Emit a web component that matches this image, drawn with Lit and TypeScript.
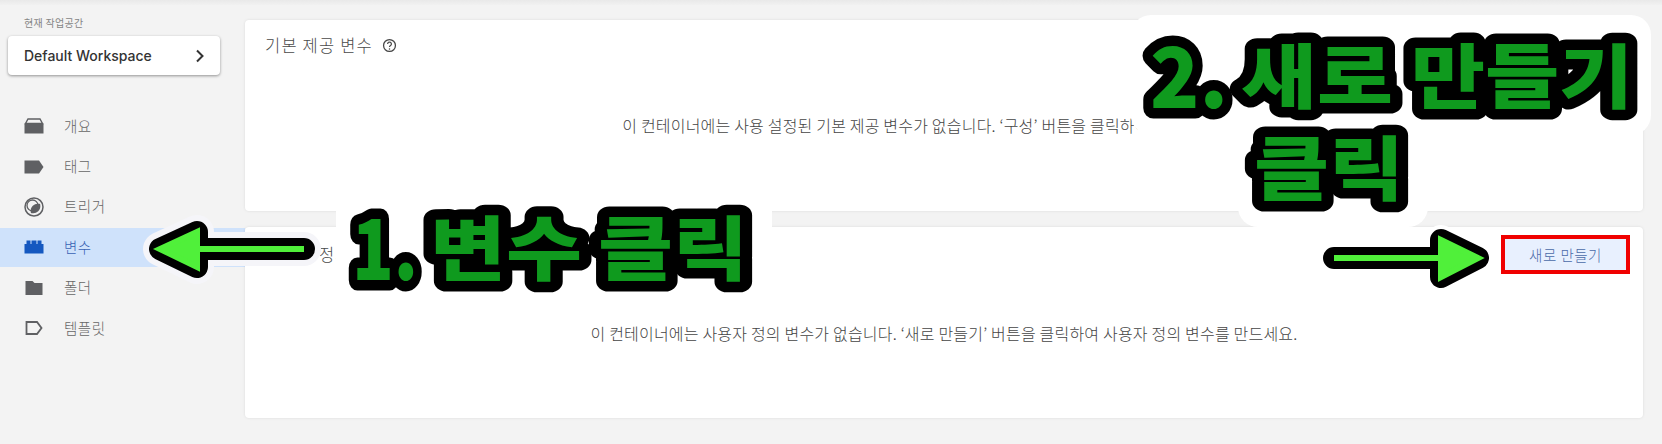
import { LitElement, html, css, svg } from "lit";
import { customElement } from "lit/decorators.js";

const icons: Record<string, unknown> = {
  overview: svg`<path d="M4 3h12l2.500 4.500h-17z" fill="none" stroke="currentColor" stroke-width="1.400"/><path d="M0.500 7.500h19V17.500h-19z" fill="currentColor"/>`,
  tag: svg`<path d="M0.500 3.500h14.500l4.500 6.500-4.500 6.500H0.500z" fill="currentColor"/>`,
  trigger: svg`<circle cx="10" cy="10" r="9" fill="none" stroke="currentColor" stroke-width="1.500"/><circle cx="8.500" cy="8.500" r="5.500" fill="none" stroke="currentColor" stroke-width="1.300"/><path d="M8 15a6 6 0 0 1 7-7 6 6 0 0 1-7 7z" fill="currentColor" stroke="currentColor" stroke-width="2.500"/>`,
  variable: svg`<path d="M0.500 16.500V7h2V3.500h4V7h1V3.500h5V7h1V3.500h4V7h2v9.500z" fill="currentColor"/>`,
  folder: svg`<path d="M1.500 3h7l2 2h8v12h-17z" fill="currentColor"/>`,
  template: svg`<path d="M2.500 4h10.500l4.500 6-4.500 6H2.500z" fill="none" stroke="currentColor" stroke-width="1.800"/>`,
};

const nav = [
  ["overview", "개요"],
  ["tag", "태그"],
  ["trigger", "트리거"],
  ["variable", "변수"],
  ["folder", "폴더"],
  ["template", "템플릿"],
];

const words: { t: string; x: number; y: number; w: number; digit?: boolean }[] = [
  { t: "1.", x: 352, y: 280, w: 66, digit: true },
  { t: "변수", x: 430, y: 275, w: 152 },
  { t: "클릭", x: 598, y: 275, w: 150 },
  { t: "2.", x: 1150, y: 108, w: 78, digit: true },
  { t: "새로", x: 1241, y: 103, w: 152 },
  { t: "만들기", x: 1411, y: 103, w: 222 },
  { t: "클릭", x: 1254, y: 195, w: 150 },
];

@customElement("app-root")
export class AppRoot extends LitElement {
  static styles = css`
    :host {
      display: block;
      width: 1662px;
      height: 444px;
      position: relative;
      overflow: hidden;
      background: #f3f3f3;
      font-family: "Inter", "Noto Sans CJK KR", sans-serif;
      color: #444;
    }
    .topband {
      height: 5px;
      background: linear-gradient(#e9e9e9, #f1f1f1);
    }
    .page {
      display: flex;
      height: 439px;
    }
    .sidebar {
      width: 245px;
      flex: none;
      padding-top: 11px;
      box-sizing: border-box;
    }
    .ws-label {
      font-size: 10px;
      line-height: 14px;
      letter-spacing: 0.3px;
      color: #858585;
      padding-left: 24px;
      font-family: "Noto Sans CJK KR", sans-serif;
    }
    .ws {
      margin: 6px 25px 0 8px;
      height: 39px;
      background: #fff;
      border-radius: 4px;
      box-shadow: 0 1px 3px rgba(0, 0, 0, 0.4);
      display: flex;
      align-items: center;
      justify-content: space-between;
      padding: 0 16px;
      font-size: 14px;
      font-weight: 500;
      color: #333;
    }
    .ws svg {
      width: 14px;
      height: 14px;
      margin-right: -3px;
    }
    .nav {
      margin-top: 31px;
      display: flex;
      flex-direction: column;
    }
    .row {
      height: 38.400px;
      margin: 1px 0;
      display: flex;
      align-items: center;
      padding-left: 24px;
      box-sizing: border-box;
      gap: 20px;
      font-size: 14.500px;
      font-weight: 300;
      letter-spacing: 0.5px;
      color: #666;
      font-family: "Noto Sans CJK KR", sans-serif;
    }
    .row span {
      margin-top: -2px;
    }
    .row svg {
      width: 20px;
      height: 20px;
      flex: none;
      color: #5f6063;
    }
    .row.active {
      background: #cfe2fb;
      color: #3a62b4;
    }
    .row.active svg {
      color: #1558c0;
    }
    .main {
      flex: 1;
      padding: 15px 19px 0 0;
      display: flex;
      flex-direction: column;
      gap: 16px;
    }
    .card {
      height: 191px;
      background: #fff;
      border-radius: 4px;
      box-shadow: 0 0 3px rgba(0, 0, 0, 0.1);
      box-sizing: border-box;
      display: flex;
      flex-direction: column;
      padding: 13px 20px 0;
      font-family: "Noto Sans CJK KR", sans-serif;
    }
    .head {
      display: flex;
      align-items: center;
      justify-content: space-between;
      height: 24px;
    }
    .head.second {
      margin: 2px 0 -1px;
    }
    .title {
      display: flex;
      align-items: center;
      gap: 9px;
      font-size: 16.500px;
      letter-spacing: 1.200px;
      font-weight: 300;
      color: #4a4a4a;
    }
    .title svg {
      width: 15px;
      height: 15px;
      color: #444;
    }
    .empty {
      text-align: center;
      font-size: 16px;
      font-weight: 300;
      letter-spacing: 0.200px;
      color: #444;
      margin-top: 57px;
      line-height: 22px;
      white-space: nowrap;
    }
    .new {
      width: 129px;
      height: 39px;
      box-sizing: border-box;
      margin-right: -7px;
      border: 4px solid #f00000;
      background: #e8f0fe;
      color: #4a6aa8;
      font-size: 14.500px;
      font-weight: 300;
      letter-spacing: 0.5px;
      display: flex;
      align-items: center;
      justify-content: center;
      flex: none;
    }
    .overlay {
      position: absolute;
      left: 0;
      top: 0;
      pointer-events: none;
    }
    .halo {
      fill: #fff;
    }
    .note {
      font-family: "Noto Sans CJK KR", sans-serif;
      font-weight: 900;
      font-size: 70px;
      fill: #0f9a1e;
      stroke: #000;
      stroke-width: 21px;
      stroke-linejoin: round;
      stroke-linecap: round;
      paint-order: stroke fill;
    }
    .digit {
      font-size: 84px;
    }
  `;

  render() {
    const leftArrow = "M304 249H197M197 232 160 249 197 267Z";
    const rightArrow = "M1334 258H1441M1441 240 1478 258 1441 277Z";
    return html`
      <div class="topband"></div>
      <div class="page">
        <aside class="sidebar">
          <div class="ws-label">현재 작업공간</div>
          <div class="ws">
            <span>Default Workspace</span>
            <svg viewBox="0 0 14 14"><path d="M4 1.500 9.500 7 4 12.500" fill="none" stroke="#333" stroke-width="2"/></svg>
          </div>
          <nav class="nav">
            ${nav.map(
              ([k, label]) => html`<div class="row ${k === "variable" ? "active" : ""}">
                <svg viewBox="0 0 20 20">${icons[k]}</svg><span>${label}</span>
              </div>`
            )}
          </nav>
        </aside>
        <main class="main">
          <section class="card">
            <div class="head">
              <div class="title">
                <span>기본 제공 변수</span>
                <svg viewBox="0 0 24 24"><circle cx="12" cy="12" r="9.500" fill="none" stroke="currentColor" stroke-width="2"/><path d="M9 9.500a3 3 0 1 1 4.500 2.600c-1 .6-1.500 1.200-1.500 2.400" fill="none" stroke="currentColor" stroke-width="2"/><circle cx="12" cy="17.500" r="1.200" fill="currentColor"/></svg>
              </div>
            </div>
            <div class="empty">이 컨테이너에는 사용 설정된 기본 제공 변수가 없습니다. ‘구성’ 버튼을 클릭하여 사용 설정하세요.</div>
          </section>
          <section class="card">
            <div class="head second">
              <div class="title"><span>사용자 정의 변수</span></div>
              <div class="new">새로 만들기</div>
            </div>
            <div class="empty">이 컨테이너에는 사용자 정의 변수가 없습니다. ‘새로 만들기’ 버튼을 클릭하여 사용자 정의 변수를 만드세요.</div>
          </section>
        </main>
      </div>
      <svg class="overlay" width="1662" height="444" viewBox="0 0 1662 444">
        <path d=${leftArrow} fill="#f5f5f9" stroke="#f5f5f9" stroke-width="34" stroke-linejoin="round" stroke-linecap="round"/>
        <path d=${leftArrow} fill="#50f03a" stroke="#000" stroke-width="22" stroke-linejoin="round" stroke-linecap="round"/>
        <path d=${leftArrow} fill="#50f03a" stroke="#50f03a" stroke-width="6"/>

        <g class="halo">
          <rect x="336" y="193" width="436" height="112" rx="18"/>
          <rect x="1131" y="15" width="520" height="120" rx="20"/>
          <rect x="1238" y="120" width="190" height="107" rx="20"/>
        </g>

        <path d=${rightArrow} fill="#fff" stroke="#fff" stroke-width="30" stroke-linejoin="round" stroke-linecap="round"/>
        <path d=${rightArrow} fill="#50f03a" stroke="#000" stroke-width="22" stroke-linejoin="round" stroke-linecap="round"/>
        <path d=${rightArrow} fill="#50f03a" stroke="#50f03a" stroke-width="6"/>

        <g class="note">
          ${words.map(
            (w) => svg`<text class=${w.digit ? "digit" : ""} x=${w.x} y=${w.y} textLength=${w.w} lengthAdjust="spacingAndGlyphs">${w.t}</text>`
          )}
        </g>
      </svg>
    `;
  }
}
